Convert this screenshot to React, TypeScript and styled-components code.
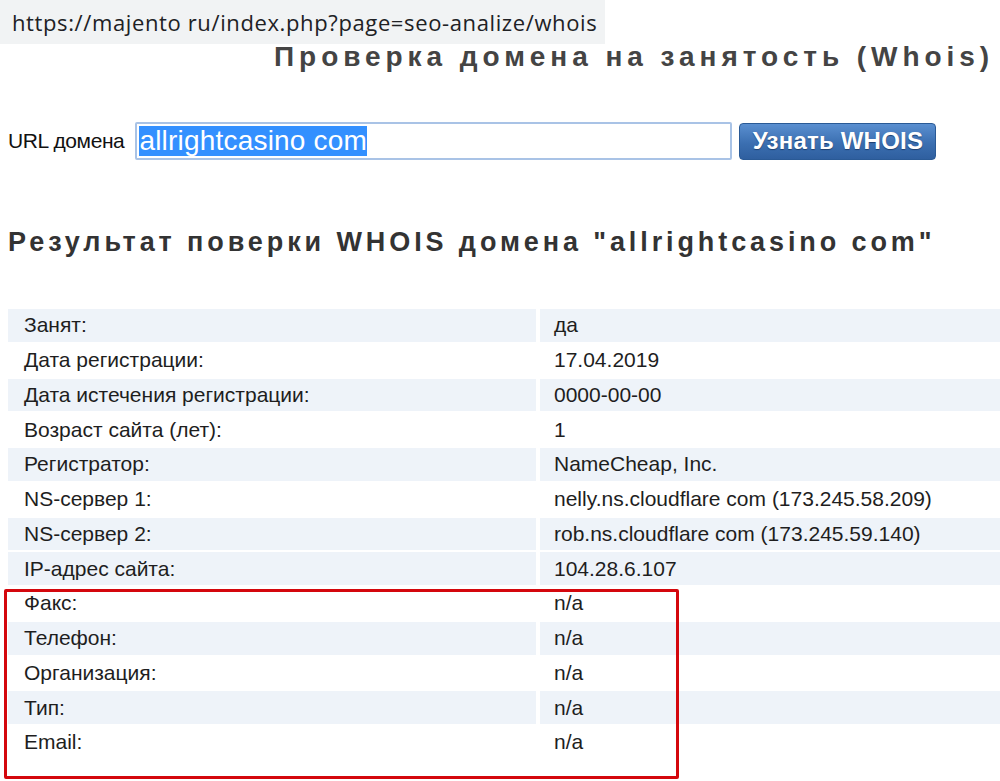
import React from 'react';
import styled, { createGlobalStyle } from 'styled-components';

const GlobalStyle = createGlobalStyle`
  html, body {
    margin: 0;
    padding: 0;
    background: #fff;
    overflow: hidden;
  }
  body {
    font-family: "Liberation Sans", Arial, sans-serif;
    color: #222;
  }
`;

const Page = styled.div`
  width: 1000px;
  height: 781px;
  position: relative;
  overflow: hidden;
`;

const AddressBar = styled.div`
  width: 605px;
  height: 44px;
  box-sizing: border-box;
  padding: 7px 0 0 12px;
  background: #f1f3f4;
  font-family: "Open Sans", "Noto Sans", sans-serif;
  font-size: 22px;
  letter-spacing: 0.62px;
  color: #202124;
  white-space: nowrap;
`;

const Title = styled.h1`
  margin: -3px 0 0 274px;
  font-size: 28px;
  font-weight: bold;
  letter-spacing: 4.95px;
  color: #444;
  white-space: nowrap;
  line-height: 32px;
`;

const SearchRow = styled.div`
  display: flex;
  align-items: center;
  margin: 49px 0 0 8px;
  gap: 11px;
`;

const Label = styled.label`
  font-size: 21px;
  letter-spacing: -0.4px;
  color: #111;
`;

const Input = styled.div`
  width: 597px;
  height: 38px;
  box-sizing: border-box;
  border: 2px solid #a9c3e6;
  border-radius: 2px;
  padding: 2px 0 0 2px;
  background: #fff;
`;

const Selected = styled.span`
  background: #3390ff;
  color: #fff;
  font-size: 28px;
  letter-spacing: 0.2px;
  line-height: 30px;
  display: inline-block;
`;

const Button = styled.button`
  margin-left: -4px;
  width: 197px;
  height: 37px;
  padding: 0;
  border: 1px solid #2a5a96;
  border-radius: 4px;
  background: linear-gradient(#5a8fd0, #3b6fb1 55%, #2f5f9f);
  color: #fff;
  font-family: "Liberation Sans", Arial, sans-serif;
  font-weight: bold;
  font-size: 24px;
  letter-spacing: 0.2px;
  text-shadow: 0 1px 1px #1d3f6e;
  cursor: pointer;
`;

const ResultTitle = styled.h2`
  margin: 67px 0 0 8px;
  font-size: 27px;
  font-weight: bold;
  letter-spacing: 3.9px;
  color: #333;
  white-space: nowrap;
  line-height: 30px;
`;

const Table = styled.div`
  display: grid;
  grid-template-columns: 528px 460px;
  column-gap: 4px;
  row-gap: 2px;
  margin: 52px 0 0 8px;
`;

const Cell = styled.div<{ $shaded: boolean; $value?: boolean }>`
  height: 32.75px;
  display: flex;
  align-items: center;
  padding-left: ${(p) => (p.$value ? '14px' : '16px')};
  background: ${(p) => (p.$shaded ? '#eef3f9' : '#fff')};
  font-size: 21px;
  letter-spacing: 0;
  color: #1e1e1e;
  white-space: nowrap;
`;

const Highlight = styled.div`
  position: absolute;
  left: 4px;
  top: 589px;
  width: 675px;
  height: 190px;
  box-sizing: border-box;
  border: 3px solid #d4070d;
  border-radius: 2px;
  pointer-events: none;
`;

const rows: [string, string, boolean][] = [
  ['Занят:', 'да', true],
  ['Дата регистрации:', '17.04.2019', false],
  ['Дата истечения регистрации:', '0000-00-00', true],
  ['Возраст сайта (лет):', '1', false],
  ['Регистратор:', 'NameCheap, Inc.', true],
  ['NS-сервер 1:', 'nelly.ns.cloudflare com (173.245.58.209)', false],
  ['NS-сервер 2:', 'rob.ns.cloudflare com (173.245.59.140)', true],
  ['IP-адрес сайта:', '104.28.6.107', true],
  ['Факс:', 'n/a', false],
  ['Телефон:', 'n/a', true],
  ['Организация:', 'n/a', false],
  ['Тип:', 'n/a', true],
  ['Email:', 'n/a', false],
];

const App = () => {
  return (
    <Page>
      <GlobalStyle />
      <AddressBar>https://majento ru/index.php?page=seo-analize/whois</AddressBar>
      <Title>Проверка домена на занятость (Whois)</Title>
      <SearchRow>
        <Label>URL домена</Label>
        <Input>
          <Selected>allrightcasino com</Selected>
        </Input>
        <Button>Узнать WHOIS</Button>
      </SearchRow>
      <ResultTitle>Результат поверки WHOIS домена "allrightcasino com"</ResultTitle>
      <Table>
        {rows.map(([label, value, shaded]) => (
          <React.Fragment key={label}>
            <Cell $shaded={shaded}>{label}</Cell>
            <Cell $shaded={shaded} $value>{value}</Cell>
          </React.Fragment>
        ))}
      </Table>
      <Highlight />
    </Page>
  );
};

export default App;
